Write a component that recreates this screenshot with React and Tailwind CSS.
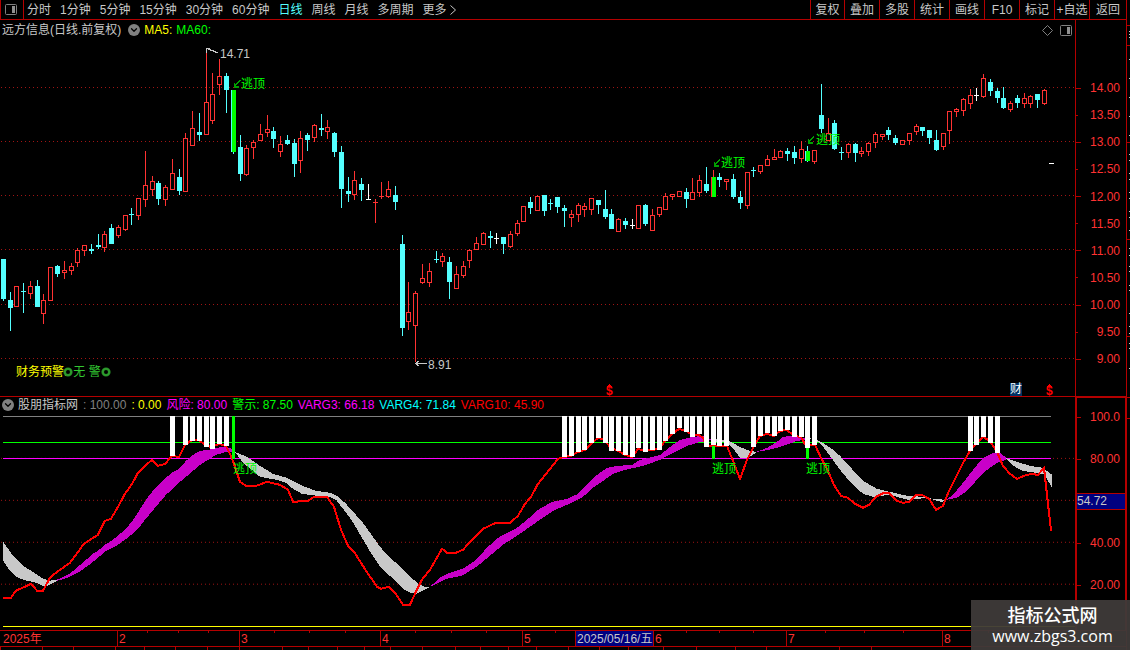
import React, { useState } from "react";
import { ChevronDown } from "lucide-react";

const periods = ["分时", "1分钟", "5分钟", "15分钟", "30分钟", "60分钟", "日线", "周线", "月线", "多周期", "更多"];
const tools = ["复权", "叠加", "多股", "统计", "画线", "F10", "标记", "+自选", "返回"];

// u = up (hollow), d = down (filled), n = unchanged
// [kind, high, body top, body bottom, low] in chart units
const candles = [
  ["d", 259, 259, 299, 301], ["d", 292, 300, 308, 331], ["u", 286, 286, 307, 307], ["d", 283, 291, 291, 313],
  ["u", 281, 286, 294, 299], ["d", 280, 286, 307, 307], ["u", 294, 300, 314, 324], ["u", 267, 267, 301, 301],
  ["d", 265, 266, 274, 277], ["u", 261, 270, 273, 279], ["u", 263, 266, 271, 275], ["u", 248, 250, 263, 267],
  ["u", 245, 245, 251, 256], ["d", 244, 249, 251, 254], ["d", 234, 245, 247, 249], ["u", 231, 234, 248, 252],
  ["d", 224, 228, 244, 244], ["u", 225, 227, 236, 238], ["u", 215, 215, 230, 231], ["d", 208, 214, 214, 225],
  ["u", 198, 198, 216, 220], ["u", 151, 185, 200, 207], ["u", 176, 181, 190, 196], ["d", 181, 183, 199, 205],
  ["u", 185, 187, 200, 206], ["u", 159, 173, 190, 190], ["d", 169, 177, 191, 195], ["u", 133, 138, 192, 192],
  ["u", 111, 128, 146, 146], ["d", 113, 132, 135, 141], ["u", 50, 102, 135, 135], ["u", 73, 94, 121, 124],
  ["u", 59, 76, 85, 95], ["d", 73, 76, 90, 113], ["d", 90, 90, 152, 154], ["d", 135, 147, 174, 181],
  ["u", 145, 148, 175, 176], ["u", 140, 142, 148, 159], ["u", 124, 134, 141, 141], ["u", 115, 129, 133, 137],
  ["d", 127, 131, 139, 148], ["u", 136, 144, 152, 157], ["d", 135, 140, 144, 145], ["d", 139, 143, 164, 177],
  ["u", 131, 138, 161, 173], ["d", 133, 135, 140, 151], ["u", 124, 125, 138, 142], ["d", 114, 128, 130, 136],
  ["u", 120, 127, 132, 139], ["d", 132, 133, 152, 157], ["d", 146, 152, 189, 208], ["d", 177, 191, 194, 202],
  ["u", 171, 180, 195, 200], ["d", 178, 184, 190, 201], ["n", 184, 199, 199, 200], ["u", 199, 202, 202, 223],
  ["u", 182, 196, 196, 199], ["u", 181, 189, 197, 198], ["d", 186, 195, 202, 210], ["d", 235, 244, 328, 336],
  ["u", 282, 312, 322, 330], ["u", 291, 293, 326, 362], ["u", 264, 278, 283, 284], ["u", 263, 271, 283, 287],
  ["d", 251, 259, 259, 263], ["u", 253, 256, 262, 267], ["d", 257, 262, 282, 299], ["u", 266, 274, 289, 289],
  ["u", 261, 266, 276, 278], ["u", 249, 250, 261, 268], ["u", 237, 243, 250, 250], ["u", 232, 233, 245, 245],
  ["d", 231, 236, 238, 248], ["n", 233, 238, 238, 244], ["d", 237, 237, 244, 254], ["u", 231, 234, 247, 248],
  ["u", 220, 223, 234, 236], ["u", 206, 206, 222, 222], ["d", 197, 202, 208, 214], ["u", 195, 196, 211, 211],
  ["d", 195, 195, 211, 216], ["d", 199, 203, 203, 210], ["d", 197, 197, 207, 213], ["d", 205, 208, 211, 227],
  ["u", 210, 214, 218, 227], ["u", 203, 205, 215, 222], ["u", 203, 206, 210, 217], ["u", 198, 198, 210, 215],
  ["d", 200, 200, 205, 214], ["d", 190, 209, 217, 219], ["d", 209, 214, 229, 229], ["u", 218, 219, 232, 232],
  ["d", 218, 221, 225, 229], ["n", 219, 225, 225, 229], ["u", 205, 205, 229, 229], ["d", 204, 205, 224, 226],
  ["u", 209, 215, 231, 231], ["u", 207, 207, 215, 217], ["u", 193, 196, 210, 210], ["u", 194, 194, 197, 200],
  ["u", 191, 191, 197, 197], ["d", 188, 192, 199, 208], ["u", 178, 192, 200, 200], ["u", 175, 180, 193, 197],
  ["d", 167, 184, 191, 193], ["u", 170, 177, 197, 197], ["d", 173, 177, 180, 187], ["u", 179, 179, 182, 190],
  ["d", 174, 179, 197, 199], ["d", 191, 197, 203, 209], ["u", 172, 172, 206, 209], ["d", 167, 170, 170, 177],
  ["u", 165, 165, 172, 174], ["u", 155, 159, 166, 166], ["u", 149, 157, 160, 160], ["u", 150, 151, 158, 158],
  ["d", 148, 151, 154, 161], ["d", 146, 152, 158, 164], ["u", 141, 149, 159, 163], ["d", 146, 151, 161, 162],
  ["u", 150, 150, 162, 164], ["d", 84, 115, 129, 133], ["u", 118, 133, 141, 141], ["d", 120, 123, 149, 150],
  ["d", 147, 152, 152, 160], ["u", 143, 144, 153, 158], ["d", 143, 144, 153, 162], ["u", 147, 151, 154, 157],
  ["u", 142, 143, 152, 156], ["u", 132, 134, 143, 148], ["u", 134, 134, 137, 140], ["d", 127, 130, 135, 140],
  ["d", 135, 138, 143, 145], ["u", 140, 140, 145, 145], ["u", 133, 133, 141, 145], ["u", 124, 126, 132, 135],
  ["d", 127, 127, 131, 136], ["d", 130, 130, 138, 144], ["d", 130, 140, 150, 151], ["u", 133, 133, 147, 150],
  ["u", 111, 111, 131, 144], ["u", 108, 109, 112, 117], ["u", 98, 99, 111, 116], ["u", 89, 95, 104, 109],
  ["n", 88, 95, 95, 101], ["u", 74, 78, 97, 98], ["d", 79, 82, 91, 96], ["d", 88, 91, 98, 103],
  ["d", 87, 98, 108, 109], ["u", 101, 103, 110, 112], ["d", 95, 98, 103, 108], ["u", 93, 98, 104, 108],
  ["u", 95, 96, 104, 108], ["d", 94, 94, 100, 108], ["u", 89, 90, 104, 105], ["n", 163, 163, 163, 163],
];
const colors = { u: "#ff3232", d: "#54ffff", n: "#ffffff" };
const escapes = [34, 105, 119];

const barX = (i) => Math.round(2.9 + 6.76 * i);

// [bar index, bottom] of the white risk bars
const riskBars = [
  [25, 456], [27, 445], [28, 441], [29, 441], [30, 447], [31, 449], [32, 444], [33, 446],
  [83, 457], [84, 456], [85, 452], [86, 450], [87, 443], [88, 438], [89, 443], [90, 451], [91, 451], [92, 455],
  [93, 457], [94, 448], [95, 452], [96, 450], [97, 450], [98, 441], [99, 434], [100, 428], [101, 432], [102, 437],
  [103, 434], [104, 447], [105, 445], [106, 446], [107, 446],
  [111, 447], [112, 436], [113, 433], [114, 436], [115, 431], [116, 430], [117, 437], [118, 437], [119, 448], [120, 445],
  [143, 451], [144, 445], [145, 437], [146, 443], [147, 453],
];

const bands = [
  { fill: "#c8c8c8", points: "3,542 13,556 23,566 31,571 43,579 50,581 57,580 57,581 52,584 45,587 36,583 23,580 16,577 9,570 3,561" },
  { fill: "#c800c8", points: "57,580 64,577 71,573 78,567 85,561 93,554 98,551 105,545 113,540 120,534 126,529 134,519 139,511 146,500 152,492 160,484 167,477 173,472 179,469 186,461 193,455 200,451 208,450 216,448 224,447 230,448 235,452 226,452 216,455 208,460 200,465 193,471 180,482 166,495 155,508 145,520 138,529 129,537 118,545 106,551 98,558 88,566 78,573 65,579 57,581" },
  { fill: "#c8c8c8", points: "235,452 247,457 260,466 273,474 287,478 297,483 305,487 316,491 330,493 337,496 346,504 354,513 363,523 370,533 380,547 388,556 397,564 407,574 417,583 424,587 431,587 423,591 417,594 410,593 403,589 393,579 381,568 372,555 362,538 352,521 343,509 336,500 330,497 317,496 302,494 293,489 286,483 277,480 260,477 253,471 243,463" },
  { fill: "#c800c8", points: "430,587 440,578 450,573 463,569 475,561 487,548 498,538 517,528 527,520 538,510 552,502 567,499 578,494 587,485 597,475 607,468 617,466 632,465 640,460 660,455 670,447 680,440 693,437 703,436 712,440 700,442 687,446 673,453 660,460 643,466 625,470 613,474 603,481 593,488 583,497 567,505 553,511 537,522 520,534 503,545 490,556 478,566 462,576 447,579" },
  { fill: "#c8c8c8", points: "712,439 729,441 740,447 750,451 757,452 748,458 740,458 732,447 727,443 712,441" },
  { fill: "#c800c8", points: "756,452 767,448 777,442 783,437 790,436 803,438 810,439 797,441 783,446 777,448 763,451" },
  { fill: "#c8c8c8", points: "808,438 817,440 823,443 832,449 840,456 850,467 863,481 877,489 890,492 907,496 923,497 933,499 947,500 942,502 937,501 927,498 908,500 897,497 890,495 873,497 863,494 850,482 840,470 830,456 820,443" },
  { fill: "#c800c8", points: "946,500 953,495 963,483 973,470 983,458 993,453 1000,453 1008,459 997,463 987,470 977,480 967,491 957,498" },
  { fill: "#c8c8c8", points: "1005,458 1017,462 1030,466 1043,468 1048,472 1052,475 1052,488 1048,481 1045,475 1037,473 1023,471 1015,467" },
];

const riskLine =
  "3,598 11,598 16,591 25,587 31,584 37,591 43,591 50,578 56,573 63,568 70,563 84,544 98,535 105,521 111,519 118,507 125,494 132,484 138,473 145,466 152,460 158,466 165,464 172,456 179,457 185,445 192,440 199,440 206,446 212,447 219,444 226,446 230,454 233,461 240,482 246,486 256,486 267,482 280,485 288,490 293,502 308,501 314,497 327,497 334,507 341,530 348,546 354,552 366,571 377,587 381,589 389,587 395,593 403,605 410,605 415,594 422,580 430,570 442,549 447,553 456,553 463,550 470,542 483,529 496,523 510,523 518,516 525,504 531,497 538,484 550,469 558,459 564,457 571,456 578,452 585,450 592,443 598,438 604,440 611,448 618,451 625,455 632,457 638,449 645,451 652,450 659,449 665,441 672,434 679,429 686,431 692,435 699,435 703,438 706,446 727,446 733,461 740,479 747,460 754,446 760,436 767,434 774,436 780,431 787,430 794,436 801,437 806,446 815,445 821,458 828,471 834,485 841,496 848,498 855,504 863,508 869,505 876,497 884,493 889,493 897,501 903,503 909,502 916,495 922,495 929,499 936,510 943,506 949,491 963,463 970,451 976,444 983,437 990,441 997,452 1003,466 1010,474 1017,479 1024,476 1031,474 1038,475 1044,468 1047,495 1051,531";

const priceLabels = ["14.00", "13.50", "13.00", "12.50", "12.00", "11.50", "11.00", "10.50", "10.00", "9.50", "9.00"];

const indicatorValues = [
  { text: ": 100.00", color: "text-[#808080]" },
  { text: ": 0.00", color: "text-[#ffff00]" },
  { text: "风险: 80.00", color: "text-[#ff00ff]" },
  { text: "警示: 87.50", color: "text-[#00ff00]" },
  { text: "VARG3: 66.18", color: "text-[#ff00ff]" },
  { text: "VARG4: 71.84", color: "text-[#00ffff]" },
  { text: "VARG10: 45.90", color: "text-[#ff0000]" },
];

const months = [
  { label: "2025年", span: 117 },
  { label: "2", span: 122 },
  { label: "3", span: 141 },
  { label: "4", span: 142 },
  { label: "5", span: 131 },
  { label: "6", span: 133 },
  { label: "7", span: 156 },
  { label: "8", span: 184 },
];

const tabSpans = [42, 31, 42, 29, 31, 32, 32, 43, 26, 29, 27, 26, 32, 33, 25, 28, 28, 32, 31, 29, 35, 33, 39, 31, 73, 32, 255];

function PanelIcon() {
  return (
    <svg width="12" height="11" viewBox="0 0 12 11" fill="none">
      <rect x="0.5" y="0.5" width="11" height="10" rx="1" stroke="#808080" />
      <rect x="7" y="2" width="3" height="7" fill="#909090" />
    </svg>
  );
}

function CollapseButton({ label }) {
  return (
    <button aria-label={label} className="flex size-3 items-center justify-center rounded-full bg-[#808080] text-black">
      <ChevronDown className="size-2.5" strokeWidth={3} />
    </button>
  );
}

// Label pinned to a point of a chart; the box is the panel's coordinate space
function Pin({ x, y, top, height, className, children }) {
  return (
    <span
      className={`absolute flex h-4 items-center leading-4 whitespace-nowrap ${className}`}
      style={{ left: `${(x / 1075) * 100}%`, top: `${((y - 8 - top) / height) * 100}%` }}
    >
      {children}
    </span>
  );
}

function Ring() {
  return (
    <svg width="10" height="10" viewBox="0 0 10 10" fill="none" stroke="#288c28">
      <circle cx="5" cy="5" r="3.3" strokeWidth="2.6" />
      <circle cx="5" cy="5" r="3.3" strokeWidth="0.6" stroke="#32b432" />
    </svg>
  );
}

function Toolbar() {
  const [active, setActive] = useState("日线");

  return (
    <div className="flex h-5 shrink-0 border-b border-l border-[#b40000] text-[#c8c8c8]">
      <button aria-label="侧栏" className="flex w-[23px] items-center border-r border-[#b40000] pl-1">
        <PanelIcon />
      </button>
      <nav className="flex items-center gap-[9px] pl-[3px]">
        {periods.map((period) => (
          <button
            key={period}
            onClick={() => setActive(period)}
            className={`flex items-center whitespace-nowrap ${active === period ? "text-[#54ffff]" : ""}`}
          >
            {period}
            {period === "更多" && (
              <svg width="10" height="10" viewBox="0 0 10 10" fill="none" stroke="currentColor">
                <path d="M3.500 0.500l5 4.500-5 4.500" />
              </svg>
            )}
          </button>
        ))}
      </nav>
      <div className="ml-auto flex">
        {tools.map((tool) => (
          <button
            key={tool}
            className="flex w-[35px] items-center justify-center border-l border-[#b40000] whitespace-nowrap first:w-[34px] last:w-[37px]"
          >
            {tool}
          </button>
        ))}
      </div>
    </div>
  );
}

function Candle({ data, index }) {
  const [kind, high, top, bottom, low] = data;
  const x = barX(index);
  const color = colors[kind];
  const h = bottom - top;

  return (
    <g>
      <rect x={x} y={high} width="1" height={low - high} fill={color} />
      {kind === "u" && h > 1 ? (
        <rect x={x - 1.5} y={top + 0.5} width="4" height={h - 1} fill="#000" stroke={color} />
      ) : (
        <rect x={x - 2} y={top} width="5" height={Math.max(h, 1)} fill={color} />
      )}
      {escapes.includes(index) && <rect x={x - 1} y={top} width="4" height={h} fill="#00ff00" />}
    </g>
  );
}

function PriceChart() {
  const box = { top: 20, height: 376 };

  return (
    <section className="relative min-w-0 flex-1">
      <svg className="absolute inset-0 size-full" viewBox="0 20 1075 376" preserveAspectRatio="none" shapeRendering="crispEdges">
        {[87, 141, 195, 249, 304, 358].map((y) => (
          <line key={y} x1="1" x2="1075" y1={y + 0.5} y2={y + 0.5} stroke="#a01414" strokeDasharray="1 3" />
        ))}
        {candles.map((c, i) => (
          <Candle key={i} data={c} index={i} />
        ))}
        <g stroke="#c8c8c8" fill="none">
          <path d="M206.500 53V48.500M206 48.500h4M208 49.500h3M210 50.500h4M213 51.500h3M215 52.500h3" />
          <path d="M415 363.500h12M416 362.500h2M417 361.500h2M416 364.500h2M417 365.500h2" />
        </g>
        <g stroke="#00a000" strokeWidth="1.5" fill="none">
          <path d="M240 80l-5 6M234.500 83v4h4" />
          <path d="M720 159l-5 6M714.500 162v4h4" />
          <path d="M814 136l-5 6M808.500 139v4h4" />
        </g>
        <g fill="#ff0000">
          <path d="M609 384h1v1h1v1h1v1h-5v-1h1v-1h1z" />
          <path d="M1049 384h1v1h1v1h1v1h-5v-1h1v-1h1z" />
        </g>
      </svg>

      <div className="relative flex h-5 items-center pr-[3px] pl-0.5">
        <h1 className="text-[#c8c8c8]">远方信息(日线.前复权)</h1>
        <div className="ml-[7px] flex items-center gap-1">
          <CollapseButton label="展开主图" />
          <span className="text-[#ffff00]">MA5:</span>
          <span className="text-[#00ff00]">MA60:</span>
        </div>
        <div className="ml-auto flex items-center gap-[7px]">
          <svg width="11" height="11" viewBox="0 0 11 11" fill="none" stroke="#808080">
            <path d="M5.500 0.500l5 5-5 5-5-5z" />
          </svg>
          <PanelIcon />
        </div>
      </div>

      <Pin x={220} y={54} {...box} className="text-[#c8c8c8]">14.71</Pin>
      <Pin x={428} y={365} {...box} className="text-[#c8c8c8]">8.91</Pin>
      <Pin x={241} y={84} {...box} className="text-[#00ff00]">逃顶</Pin>
      <Pin x={721} y={163} {...box} className="text-[#00ff00]">逃顶</Pin>
      <Pin x={816} y={140} {...box} className="text-[#00ff00]">逃顶</Pin>
      <Pin x={16} y={372} {...box} className="text-[#32c832]">
        <span className="text-[#ffff00]">财务预警:</span>
        <span className="-ml-1"><Ring /></span>
        <span>无 警</span>
        <Ring />
      </Pin>
      <Pin x={606} y={391} {...box} className="font-bold text-[#ff0000]">$</Pin>
      <Pin x={1010} y={389} {...box} className="text-white">
        <span className="bg-[#003264] leading-[13px]">财</span>
      </Pin>
      <Pin x={1046} y={391} {...box} className="font-bold text-[#ff0000]">$</Pin>
    </section>
  );
}

function PriceAxis() {
  return (
    <div className="flex w-[51px] flex-col justify-between border-l border-[#b40000] pt-[60px] pb-[29px] text-[#ff3232]">
      {priceLabels.map((label, i) => (
        <div key={label} className="flex h-4 items-center justify-between pr-1.5">
          <span className={`h-px bg-[#b40000] ${i % 2 ? "w-0.5" : "w-[5px]"}`} />
          {label}
        </div>
      ))}
    </div>
  );
}

function IndicatorChart() {
  const box = { top: 397, height: 233 };

  return (
    <section className="relative min-w-0 flex-1">
      <svg className="absolute inset-0 size-full" viewBox="0 397 1075 233" preserveAspectRatio="none" shapeRendering="crispEdges">
        {[458, 500, 542, 584].map((y) => (
          <line key={y} x1="1" x2="1075" y1={y + 0.5} y2={y + 0.5} stroke="#a01414" strokeDasharray="1 3" />
        ))}
        <rect x="3" y="416" width="1048" height="1" fill="#808080" />
        <rect x="3" y="442" width="1048" height="1" fill="#00ff00" />
        <rect x="3" y="458" width="1048" height="1" fill="#ff00ff" />
        <rect x="3" y="626" width="1072" height="1" fill="#ffff00" />
        {bands.map((band, i) => (
          <polygon key={i} points={band.points} fill={band.fill} />
        ))}
        <polyline points={riskLine} fill="none" stroke="#ff0000" strokeWidth="2" />
        {riskBars.map(([i, bottom]) => (
          <rect key={i} x={barX(i) - 2} y="416" width="5" height={bottom - 416} fill="#fff" />
        ))}
        <rect x="232" y="416" width="3" height="43" fill="#00ff00" />
        <rect x="712" y="446" width="3" height="13" fill="#00ff00" />
        <rect x="806" y="448" width="3" height="11" fill="#00ff00" />
      </svg>

      <div className="relative flex h-4 items-center gap-[5px] pl-0.5">
        <CollapseButton label="展开副图" />
        <h2 className="-ml-px text-[#c8c8c8]">股朋指标网</h2>
        {indicatorValues.map((item) => (
          <span key={item.text} className={`whitespace-nowrap ${item.color}`}>
            {item.text}
          </span>
        ))}
      </div>

      <Pin x={233} y={469} {...box} className="text-[#00ff00]">逃顶</Pin>
      <Pin x={712} y={469} {...box} className="text-[#00ff00]">逃顶</Pin>
      <Pin x={806} y={469} {...box} className="text-[#00ff00]">逃顶</Pin>
    </section>
  );
}

function IndicatorAxis() {
  return (
    <div className="flex w-[51px] flex-col justify-between border-t border-r border-l-2 border-[#b40000] pt-[11px] pb-[37px] text-[#ff3232]">
      {["100.0", "80.00", "54.72", "40.00", "20.00"].map((label) =>
        label === "54.72" ? (
          <div key={label} className="flex h-[17px] items-center border-y border-[#b40000] bg-[#000080] text-[#c8c8c8]">
            {label}
          </div>
        ) : (
          <div key={label} className="flex h-4 items-center justify-between pr-[5px]">
            <span className="h-px w-1 bg-[#b40000]" />
            {label}
          </div>
        )
      )}
    </div>
  );
}

function TimeAxis() {
  return (
    <div className="relative flex h-[17px] shrink-0 border-y border-[#b40000] leading-4 text-[#ff3232]">
      {months.map((month, i) => (
        <div
          key={month.label}
          className={`relative ${i ? "border-l border-[#b40000] pl-px" : "pl-[3px]"}`}
          style={{ width: `${(month.span / 1126) * 100}%` }}
        >
          {month.label}
          {i > 0 && (
            <div className="absolute inset-x-0 top-0 flex justify-evenly">
              <span className="h-0.5 w-px bg-[#b40000]" />
              <span className="h-0.5 w-px bg-[#b40000]" />
              <span className="h-0.5 w-px bg-[#b40000]" />
            </div>
          )}
        </div>
      ))}
      <div
        className="absolute inset-y-0 border-x border-[#b40000] bg-[#000080] px-px whitespace-nowrap text-[#c8c8c8]"
        style={{ left: `${(575 / 1126) * 100}%` }}
      >
        2025/05/16/五
      </div>
    </div>
  );
}

export default function App() {
  return (
    <main className="relative flex h-screen overflow-hidden bg-black font-['Liberation_Sans','Noto_Sans_CJK_SC',sans-serif] text-xs">
      <div className="flex min-w-0 flex-1 flex-col">
        <Toolbar />
        <div className="flex flex-[377] border-b border-[#b40000]">
          <PriceChart />
          <PriceAxis />
        </div>
        <div className="flex flex-[233]">
          <IndicatorChart />
          <IndicatorAxis />
        </div>
        <TimeAxis />
        {/* top edge of the next tab row */}
        <div className="flex h-[3px] shrink-0">
          {tabSpans.map((span, i) => (
            <span key={i} className="border-l border-[#b40000]" style={{ width: `${(span / 1126) * 100}%` }} />
          ))}
        </div>
      </div>

      <svg className="h-full w-1 shrink-0" viewBox="0 0 4 650" preserveAspectRatio="none" shapeRendering="crispEdges">
        <rect width="1" height="650" fill="#b40000" />
        {[25, 45, 142, 239, 336, 397, 418].map((y) => (
          <rect key={y} x="1" y={y} width="3" height="1" fill="#b40000" />
        ))}
        {[31, 34, 37, 59, 78, 97, 116, 135, 154, 160, 173, 179, 192, 198, 211, 217, 230, 248, 255, 266, 271, 285, 290, 313, 326, 333, 343, 348, 368].map((y) => (
          <rect key={y} x="3" y={y} width="1" height="1" fill="#c8c8c8" />
        ))}
      </svg>

      <footer className="absolute right-0 bottom-0 flex h-[50px] w-[159px] flex-col items-center justify-center bg-[#3e3a39]/95 pl-1 text-white">
        <p className="text-lg leading-[22px] font-medium font-['Noto_Sans_CJK_SC',sans-serif]">指标公式网</p>
        <a href="#" className="text-base leading-[22px] font-['Open_Sans',sans-serif]">www.zbgs3.com</a>
      </footer>
    </main>
  );
}
